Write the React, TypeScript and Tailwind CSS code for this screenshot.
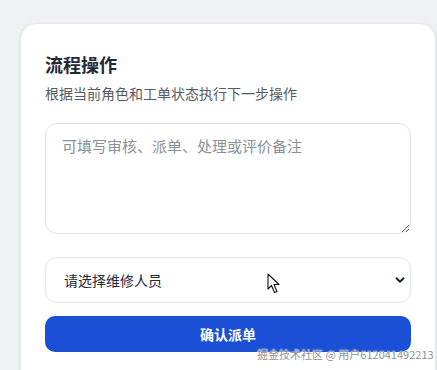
import { ChevronDown } from "lucide-react"

export default function App() {
  return (
    <div
      className="relative h-[370px] w-[437px] overflow-hidden bg-[#eef0f4]"
      style={{ fontFamily: '"Noto Sans CJK SC", "Noto Sans", sans-serif' }}
    >
      <div className="ml-5 mt-[23px] w-[416px] h-[400px] rounded-2xl border border-[#e5e7eb] bg-white px-6 pt-[26px] shadow-sm">
        <h2 className="text-[18px] leading-[28px] font-bold text-[#1f2937]">流程操作</h2>
        <p className="mt-[5px] text-[14px] leading-[20px] text-[#565b63]">根据当前角色和工单状态执行下一步操作</p>

        <textarea
          placeholder="可填写审核、派单、处理或评价备注"
          className="mt-5 block h-[111px] w-full rounded-xl border border-[#dcdfe4] px-4 py-[11px] text-[15px] leading-[22px] text-[#1f2937] placeholder:text-[#8a8f98] outline-none"
        />

        <div className="relative mt-[23px]">
          <select className="block h-[46px] w-full appearance-none rounded-xl border border-[#e3e6ea] bg-white pl-[18px] text-[14px] text-[#1f2937] outline-none">
            <option>请选择维修人员</option>
          </select>
          <ChevronDown
            size={14}
            strokeWidth={3.5}
            className="pointer-events-none absolute right-[4px] top-[16px] text-[#1f2937]"
          />
        </div>

        <button className="mt-[13px] h-9 w-full rounded-[10px] bg-[#1a4fd6] text-[14px] font-bold text-white">
          确认派单
        </button>
      </div>

      {/* mouse cursor */}
      <svg className="absolute left-[267px] top-[273px]" width="14" height="21" viewBox="0 0 14 21">
        <path d="M1 1 L1 16 L4.5 12.5 L7.5 19.5 L10 18.5 L7 11.5 L12 11.5 Z" fill="#fff" stroke="#111" strokeWidth="1.1" strokeLinejoin="round" />
      </svg>

      {/* watermark */}
      <div
        className="absolute left-[257px] top-[346px] text-[11px] leading-[16px] whitespace-nowrap text-[#8f9195]"
        style={{ textShadow: "0 0 1px #fff, 0 0 2px #fff" }}
      >
        掘金技术社区 @ 用户612041492213
      </div>
    </div>
  )
}
